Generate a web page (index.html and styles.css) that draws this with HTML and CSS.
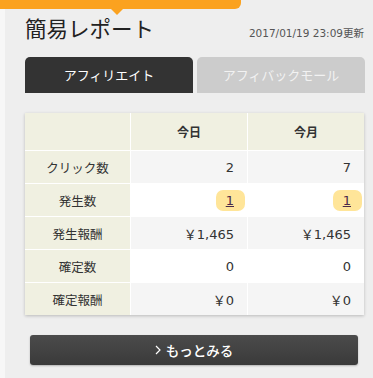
FILE: index.html
```html
<!DOCTYPE html>
<html lang="ja">
<head>
<meta charset="utf-8">
<title>簡易レポート</title>
<link rel="stylesheet" href="styles.css">
</head>
<body>
<div class="page">
  <div class="strip"></div>
  <div class="main">
    <div class="head">
      <h1 class="title">簡易レポート</h1>
      <span class="updated">2017/01/19 23:09更新</span>
    </div>
    <div class="tabs">
      <div class="tab tab-active">アフィリエイト</div>
      <div class="tab tab-off">アフィバックモール</div>
    </div>
    <div class="report">
      <div class="cell hd"></div>
      <div class="cell hd">今日</div>
      <div class="cell hd">今月</div>

      <div class="cell lbl">クリック数</div>
      <div class="cell val grey">2</div>
      <div class="cell val grey">7</div>

      <div class="cell lbl">発生数</div>
      <div class="cell val"><a class="badge" href="#">1</a></div>
      <div class="cell val"><a class="badge" href="#">1</a></div>

      <div class="cell lbl">発生報酬</div>
      <div class="cell val grey">￥1,465</div>
      <div class="cell val grey">￥1,465</div>

      <div class="cell lbl">確定数</div>
      <div class="cell val">0</div>
      <div class="cell val">0</div>

      <div class="cell lbl">確定報酬</div>
      <div class="cell val grey">￥0</div>
      <div class="cell val grey">￥0</div>
    </div>
    <a class="more" href="#"><svg class="chev" width="6" height="10" viewBox="0 0 6 10"><path d="M1 1 L5 5 L1 9" fill="none" stroke="#fff" stroke-width="1.2"/></svg><span>もっとみる</span></a>
  </div>
</div>
<div class="tip"></div>
</body>
</html>
```

FILE: styles.css
```css
html, body {
  margin: 0;
  padding: 0;
}
body {
  background: #eeeeee;
  font-family: "DejaVu Sans", "Noto Sans CJK JP", sans-serif;
  color: #333;
  position: relative;
  width: 373px;
  height: 378px;
  overflow: hidden;
}
.page {
  display: flex;
  min-height: 378px;
}
.strip {
  width: 5px;
  flex: none;
  background: #f7f7f7;
}
.main {
  flex: 1;
  padding: 0 8px 0 20px;
}
.head {
  display: flex;
  justify-content: space-between;
  align-items: baseline;
  padding-top: 13px;
}
.title {
  margin: 0;
  font-family: "Noto Sans CJK JP", sans-serif;
  font-weight: 400;
  font-size: 21.5px;
  line-height: 30px;
  color: #222;
}
.updated {
  font-size: 10.5px;
  color: #555;
  margin-right: 1px;
}
.tabs {
  display: flex;
  gap: 4px;
  margin-top: 14px;
}
.tab {
  flex: 1;
  height: 36px;
  line-height: 36px;
  text-align: center;
  font-family: "Noto Sans CJK JP", sans-serif;
  font-size: 13px;
  border-radius: 5px 5px 0 0;
}
.tab-active {
  background: #333333;
  color: #fff;
}
.tab-off {
  background: #cccccc;
  color: #f2f2f2;
}
.report {
  margin-top: 20px;
  width: 339px;
  display: grid;
  grid-template-columns: 105px 1fr 1fr;
  grid-template-rows: 37px;
  grid-auto-rows: 32px;
  gap: 1px;
  background: #fff;
  box-shadow: 0 1px 3px rgba(0, 0, 0, 0.22);
}
.cell {
  display: flex;
  align-items: center;
  font-size: 12.5px;
}
.hd {
  background: #f0f0e1;
  font-family: "Noto Sans CJK JP", sans-serif;
  font-weight: 700;
  font-size: 12px;
  justify-content: center;
}
.lbl {
  background: #f0f0e1;
  font-family: "Noto Sans CJK JP", sans-serif;
  justify-content: center;
  color: #333;
}
.val {
  background: #fff;
  justify-content: flex-end;
  padding-right: 13px;
  font-size: 13px;
  color: #333;
}
.val.grey {
  background: #f5f5f5;
}
.badge {
  display: inline-block;
  background: #ffe599;
  border-radius: 7px;
  padding: 0 11px 0 10px;
  margin-right: -11px;
  height: 21px;
  line-height: 21px;
  color: #4a2a4a;
  text-decoration: underline;
}
.more {
  display: flex;
  justify-content: center;
  align-items: center;
  gap: 5px;
  margin: 20px 7px 0 5px;
  height: 30px;
  border-radius: 3px;
  background: linear-gradient(#4b4b4b, #3a3a3a);
  box-shadow: 0 1px 2px rgba(0, 0, 0, 0.25);
  color: #fff;
  text-decoration: none;
  font-family: "Noto Sans CJK JP", sans-serif;
  font-weight: 500;
  font-size: 13.5px;
}
.chev {
  display: block;
}
.tip {
  position: absolute;
  left: 0;
  top: 0;
  width: 241px;
  height: 9px;
  background: #fba21f;
  border-bottom-right-radius: 6px;
}
.tip::after {
  content: "";
  position: absolute;
  left: 111px;
  top: 9px;
  border-left: 6px solid transparent;
  border-right: 6px solid transparent;
  border-top: 6px solid #fba21f;
}
```
